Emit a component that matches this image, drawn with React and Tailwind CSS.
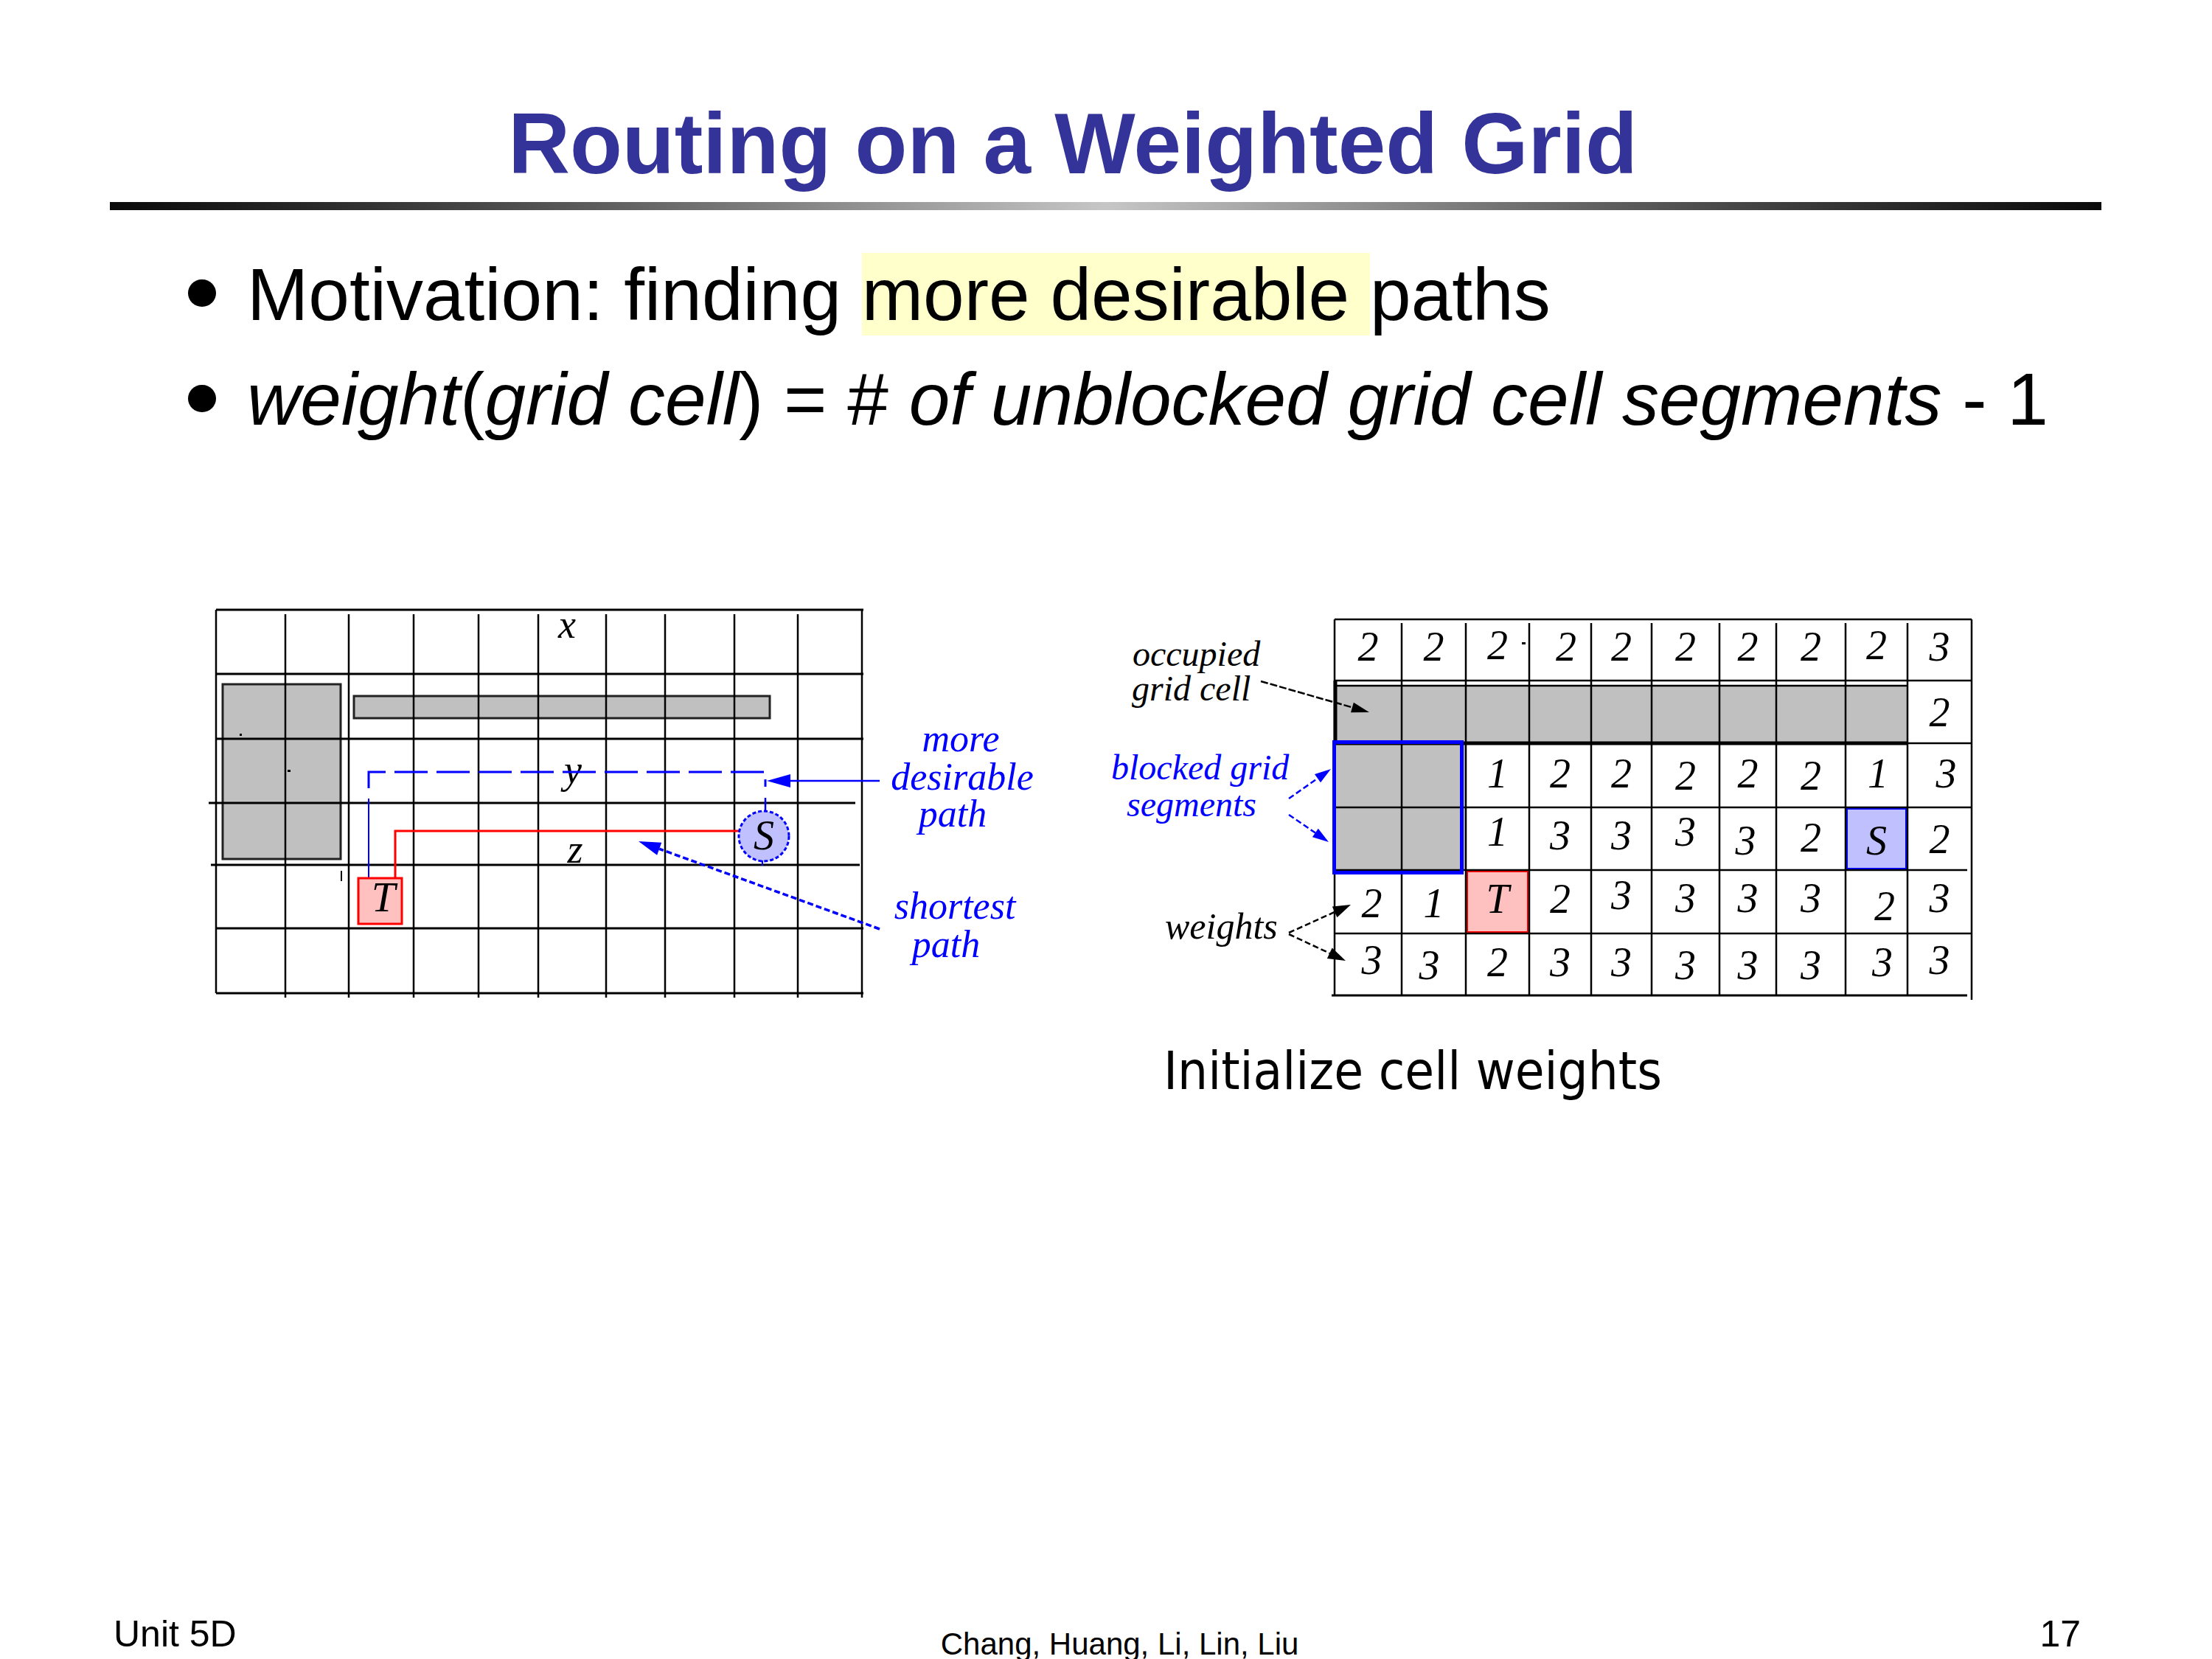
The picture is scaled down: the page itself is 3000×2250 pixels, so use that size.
import React from "react";

const SERIF = "'Liberation Serif', 'Times New Roman', serif";

// columns / rows of the left routing grid (page pixels)
const L_COLS = [293, 387, 473, 561, 649, 730, 822, 902, 996, 1082, 1169];
const L_ROWS = [
  [827, 293, 1171],
  [914, 293, 1171],
  [1002, 293, 1171],
  [1089, 283, 1160],
  [1173, 286, 1166],
  [1259, 293, 1171],
  [1347, 293, 1171],
];

// columns / rows of the weighted grid
const R_COLS = [1810, 1901, 1988, 2074, 2158, 2240, 2332, 2409, 2503, 2587, 2674];
const R_ROWS = [840, 923, 1008, 1095, 1180, 1266, 1350];

// [label, dx, top offset inside the cell]
const WEIGHTS = [
  [["2", 0, 18], ["2", 0, 18], ["2", 0, 16], ["2", 8, 18], ["2", 0, 18], ["2", 0, 18], ["2", 0, 18], ["2", 0, 18], ["2", 0, 16], ["3", 0, 18]],
  [null, null, null, null, null, null, null, null, null, ["2", 0, 24]],
  [null, null, ["1", 0, 22], ["2", 0, 22], ["2", 0, 22], ["2", 0, 25], ["2", 0, 22], ["2", 0, 25], ["1", 2, 22], ["3", 9, 22]],
  [null, null, ["1", 0, 14], ["3", 0, 19], ["3", 0, 19], ["3", 0, 14], ["3", -3, 26], ["2", 0, 22], ["S", 0, 26], ["2", 0, 24]],
  [["2", 5, 26], ["1", 0, 26], ["T", 0, 20], ["2", 0, 20], ["3", 0, 15], ["3", 0, 19], ["3", 0, 19], ["3", 0, 19], ["2", 11, 30], ["3", 0, 19]],
  [["3", 5, 17], ["3", -6, 24], ["2", 0, 20], ["3", 0, 20], ["3", 0, 20], ["3", 0, 24], ["3", 0, 24], ["3", 0, 24], ["3", 8, 20], ["3", 0, 17]],
];

function Arrow({ x1, y1, x2, y2, color = "#000", width = 2.5, dash, len = 26, half = 8 }) {
  const dx = x2 - x1;
  const dy = y2 - y1;
  const d = Math.hypot(dx, dy);
  const ux = dx / d;
  const uy = dy / d;
  const bx = x2 - ux * len;
  const by = y2 - uy * len;
  const px = -uy * half;
  const py = ux * half;
  return (
    <g>
      <line x1={x1} y1={y1} x2={bx} y2={by} stroke={color} strokeWidth={width} strokeDasharray={dash} />
      <polygon points={`${x2},${y2} ${bx + px},${by + py} ${bx - px},${by - py}`} fill={color} />
    </g>
  );
}

function Label({ x, y, size = 52, color = "#000", anchor = "middle", children }) {
  return (
    <text x={x} y={y} fontFamily={SERIF} fontStyle="italic" fontSize={size} fill={color} textAnchor={anchor}>
      {children}
    </text>
  );
}

function RouteDiagram() {
  return (
    <svg width="1160" height="560" viewBox="280 800 1160 560" className="shrink-0">
      {/* obstacles */}
      <rect x="302" y="928" width="160" height="237" fill="#c0c0c0" stroke="#222" strokeWidth="3" />
      <rect x="480" y="944" width="564" height="30" fill="#c0c0c0" stroke="#222" strokeWidth="3" />

      {/* grid */}
      {L_ROWS.map(([y, a, b]) => (
        <line key={y} x1={a} y1={y} x2={b} y2={y} stroke="#000" strokeWidth="3" />
      ))}
      {L_COLS.map((x, i) => (
        <line
          key={x}
          x1={x}
          y1={i === 0 || i === 10 ? 827 : 833}
          x2={x}
          y2={i === 0 ? 1347 : 1353}
          stroke="#000"
          strokeWidth="2.5"
        />
      ))}
      <line x1="463" y1="1181" x2="463" y2="1195" stroke="#000" strokeWidth="2" />
      <rect x="325" y="995" width="3" height="3" fill="#000" />
      <rect x="390" y="1044" width="4" height="3" fill="#000" />

      <Label x={769} y={865} size={54}>x</Label>
      <Label x={777} y={1062} size={54}>y</Label>
      <Label x={780} y={1170} size={54}>z</Label>

      {/* more desirable path */}
      <polyline
        points="500,1069 500,1047 1038,1047 1038,1067"
        fill="none"
        stroke="#0000ff"
        strokeWidth="3"
        strokeDasharray="45 12"
      />
      <line x1="500" y1="1083" x2="500" y2="1191" stroke="#0000ff" strokeWidth="2" />
      <line x1="1038" y1="1082" x2="1038" y2="1101" stroke="#0000ff" strokeWidth="2.5" />

      {/* shortest path */}
      <polyline points="536,1191 536,1127 1003,1127" fill="none" stroke="#ff0000" strokeWidth="3" />

      {/* target */}
      <rect x="486" y="1191" width="59" height="62" fill="#ffc0c0" stroke="#ff0000" strokeWidth="3" />
      <Label x={520} y={1236} size={58}>T</Label>

      {/* source */}
      <circle cx="1036" cy="1134" r="34" fill="#c0c0ff" stroke="#0000ff" strokeWidth="3" strokeDasharray="5 3" />
      <line x1="1034" y1="1167" x2="1034" y2="1174" stroke="#0000ff" strokeWidth="2" />
      <Label x={1036} y={1152} size={56}>S</Label>

      <Arrow x1={1193} y1={1059} x2={1040} y2={1059} color="#0000ff" width={2.5} len={32} half={9} />
      <Arrow x1={1193} y1={1260} x2={866} y2={1141} color="#0000ff" width={3.5} dash="8 4" len={30} half={9} />

      <Label x={1303} y={1019} color="#0000ff">more</Label>
      <Label x={1305} y={1071} color="#0000ff">desirable</Label>
      <Label x={1292} y={1121} color="#0000ff">path</Label>
      <Label x={1295} y={1246} color="#0000ff">shortest</Label>
      <Label x={1283} y={1298} color="#0000ff">path</Label>
    </svg>
  );
}

function WeightDiagram() {
  const right = R_COLS[10];
  return (
    <svg width="1220" height="560" viewBox="1490 800 1220 560" className="shrink-0">
      {/* blocked cells */}
      <rect x="1810" y="930" width="777" height="78" fill="#c0c0c0" />
      <rect x="1810" y="1008" width="178" height="172" fill="#c0c0c0" />
      <rect x="2504.5" y="1096.5" width="81" height="82" fill="#c0c0ff" stroke="#0000ff" strokeWidth="3" />
      <rect x="1989.5" y="1181.5" width="83" height="83" fill="#ffc0c0" stroke="#ff0000" strokeWidth="3" />

      {/* grid */}
      <line x1="1810" y1="840" x2={right} y2="840" stroke="#000" strokeWidth="2.5" />
      <line x1="1810" y1="923" x2={right} y2="923" stroke="#000" strokeWidth="2.5" />
      <line x1="1810" y1="930" x2="2587" y2="930" stroke="#000" strokeWidth="2.5" />
      <line x1="1810" y1="1008" x2="2587" y2="1008" stroke="#000" strokeWidth="5" />
      <line x1="2587" y1="1008" x2={right} y2="1008" stroke="#000" strokeWidth="2.5" />
      <line x1="1810" y1="1095" x2={right} y2="1095" stroke="#000" strokeWidth="2.5" />
      <line x1="1810" y1="1180" x2="2668" y2="1180" stroke="#000" strokeWidth="2.5" />
      <line x1="1810" y1="1266" x2={right} y2="1266" stroke="#000" strokeWidth="2.5" />
      <line x1="1806" y1="1350" x2="2668" y2="1350" stroke="#000" strokeWidth="3" />
      {R_COLS.map((x, i) => (
        <line
          key={x}
          x1={x}
          y1={i === 0 || i === 10 ? 840 : 845}
          x2={x}
          y2={i === 10 ? 1356 : 1350}
          stroke="#000"
          strokeWidth="2.5"
        />
      ))}
      <line x1="1811" y1="923" x2="1811" y2="1008" stroke="#000" strokeWidth="5" />
      <rect x="1809.5" y="1006.5" width="173" height="177" fill="none" stroke="#0000ff" strokeWidth="5" />

      {/* weights */}
      {WEIGHTS.map((row, r) =>
        row.map((cell, c) => {
          if (!cell) return null;
          const [label, dx, dy] = cell;
          const cx = (R_COLS[c] + R_COLS[c + 1]) / 2 + dx;
          return (
            <Label key={`${r}-${c}`} x={cx} y={R_ROWS[r] + dy + 38} size={56}>
              {label}
            </Label>
          );
        })
      )}
      <rect x="2064" y="871" width="5" height="3" fill="#000" />

      {/* callouts */}
      <Label x={1536} y={903} size={48} anchor="start">occupied</Label>
      <Label x={1535} y={950} size={48} anchor="start">grid cell</Label>
      <Label x={1507} y={1057} size={48} anchor="start" color="#0000ff">blocked grid</Label>
      <Label x={1528} y={1107} size={48} anchor="start" color="#0000ff">segments</Label>
      <Label x={1580} y={1273} size={50} anchor="start">weights</Label>

      <Arrow x1={1710} y1={924} x2={1857} y2={966} dash="10 3" len={24} half={7} />
      <Arrow x1={1748} y1={1083} x2={1805} y2={1043} color="#0000ff" dash="8 4" len={22} half={7} />
      <Arrow x1={1748} y1={1105} x2={1802} y2={1142} color="#0000ff" dash="8 4" len={22} half={7} />
      <Arrow x1={1748} y1={1265} x2={1832} y2={1227} dash="8 4" len={24} half={8} />
      <Arrow x1={1748} y1={1267} x2={1825} y2={1303} dash="8 4" len={24} half={8} />
    </svg>
  );
}

export default function App() {
  return (
    <div className="w-[3000px] h-[2250px] bg-white text-black flex flex-col overflow-hidden font-['Liberation_Sans',Arial,sans-serif]">
      {/* TITLE */}
      <h1 className="mt-[137px] ml-[105px] w-[2700px] text-center text-[116px] leading-[116px] font-bold text-[#333399]">
        Routing on a Weighted Grid
      </h1>
      <div className="mt-[21px] ml-[149px] w-[2701px] h-[11px] bg-linear-to-r from-[#0a0a0a] via-[#c6c6c6] to-[#0a0a0a]" />

      {/* BULLETS */}
      <ul className="mt-[57px] flex flex-col gap-[27px] text-[100px] leading-[115px]">
        <li className="flex items-start pl-[255px]">
          <span className="mt-[37px] w-[38px] h-[37px] rounded-full bg-black shrink-0" />
          <span className="ml-[42px] whitespace-nowrap">
            Motivation: finding <span className="bg-[#ffffcc]">more desirable </span>paths
          </span>
        </li>
        <li className="flex items-start pl-[255px]">
          <span className="mt-[38px] w-[38px] h-[37px] rounded-full bg-black shrink-0" />
          <span className="ml-[42px] whitespace-nowrap">
            <i>weight</i>(<i>grid cell</i>) = # <i>of unblocked grid cell segments</i> - 1
          </span>
        </li>
      </ul>

      {/* FIGURES */}
      <div className="mt-[201px] flex items-start pl-[280px]">
        <RouteDiagram />
        <div className="ml-[50px] flex flex-col">
          <WeightDiagram />
          <p className="mt-[56px] ml-[88px] text-[72px] leading-none whitespace-nowrap font-['DejaVu_Sans_Condensed','DejaVu_Sans',sans-serif]">
            Initialize cell weights
          </p>
        </div>
      </div>

      {/* FOOTER */}
      <div className="mt-auto h-[80px] flex items-end whitespace-nowrap">
        <span className="ml-[154px] mb-[9px] text-[50px] leading-none">Unit 5D</span>
        <span className="ml-[955px] mb-[-1px] text-[42px] leading-none">Chang, Huang, Li, Lin, Liu</span>
        <span className="ml-auto mr-[178px] mb-[9px] text-[50px] leading-none">17</span>
      </div>
    </div>
  );
}
